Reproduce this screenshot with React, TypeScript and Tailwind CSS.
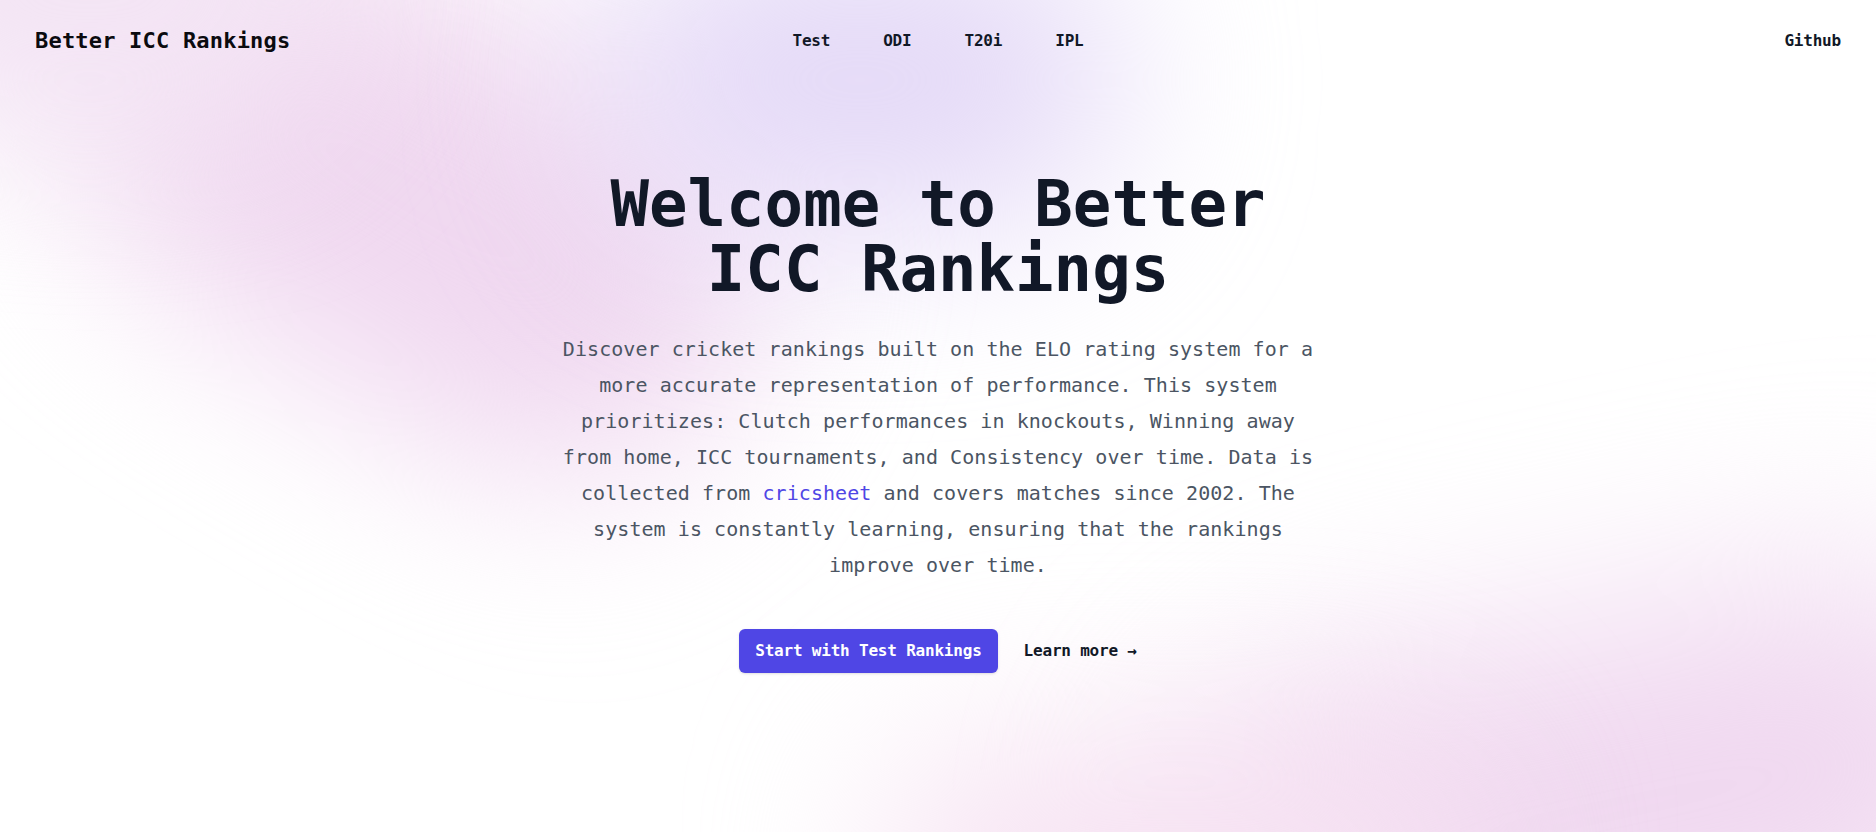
import React from "react";

const mono = "font-['DejaVu_Sans_Mono','Liberation_Mono',monospace]";

const navItems = ["Test", "ODI", "T20i", "IPL"];

export default function App() {
  return (
    <div className={`relative min-h-screen overflow-hidden bg-white ${mono}`}>
      {/* Background blobs */}
      <div className="pointer-events-none absolute inset-0">
        <div className="absolute left-[60px] top-[0px] h-[400px] w-[720px] rotate-[30deg] rounded-full bg-[#f0d8f0] blur-[90px]" />
        <div className="absolute left-[600px] top-[-70px] h-[300px] w-[520px] rounded-full bg-[#e4d9f7] blur-[90px]" />
        <div className="absolute left-[-160px] top-[-160px] h-[300px] w-[500px] rounded-full bg-[#f3e4f4] blur-[80px]" />
        <div className="absolute left-[1180px] top-[620px] h-[380px] w-[860px] rotate-[-12deg] rounded-full bg-[#f0d8f0] blur-[100px]" />
        <div className="absolute left-[880px] top-[740px] h-[260px] w-[600px] rounded-full bg-[#f6e2f2] blur-[90px]" />
      </div>

      {/* Header */}
      <header className="relative flex items-center px-[35px] pt-[27px] pb-[25px]">
        <div className="flex flex-1">
          <a href="#" className="text-[22px] leading-7 font-bold tracking-[0.2px] text-[#0b0b0f]">
            Better ICC Rankings
          </a>
        </div>
        <nav className="flex gap-x-[53px]">
          {navItems.map((item) => (
            <a
              key={item}
              href="#"
              className="text-[16px] leading-6 font-semibold tracking-[-0.2px] text-[#111827]"
            >
              {item}
            </a>
          ))}
        </nav>
        <div className="flex flex-1 justify-end">
          <a href="#" className="text-[16px] leading-6 font-semibold tracking-[-0.2px] text-[#111827]">
            Github
          </a>
        </div>
      </header>

      {/* Hero */}
      <main className="relative flex flex-col items-center pt-[92px] text-center">
        <h1 className="max-w-[720px] text-[64px] leading-[65px] font-bold text-[#111827]">
          Welcome to Better ICC Rankings
        </h1>
        <p className="mt-[29px] max-w-[764px] text-[20px] leading-9 tracking-[0.06px] text-[#4b5563]">
          Discover cricket rankings built on the ELO rating system for a more accurate
          representation of performance. This system prioritizes: Clutch performances in
          knockouts, Winning away from home, ICC tournaments, and Consistency over time. Data
          is collected from <a href="#" className="text-[#4f46e5]">cricsheet</a> and covers
          matches since 2002. The system is constantly learning, ensuring that the rankings
          improve over time.
        </p>
        <div className="mt-[46px] flex items-center justify-center gap-x-[26px]">
          <a
            href="#"
            className="flex h-11 items-center rounded-md bg-[#4f46e5] px-4 text-[16px] font-semibold tracking-[-0.2px] text-white shadow-sm"
          >
            Start with Test Rankings
          </a>
          <a href="#" className="text-[16px] leading-6 font-semibold tracking-[-0.2px] text-[#111827]">
            Learn more <span aria-hidden="true">→</span>
          </a>
        </div>
      </main>
    </div>
  );
}
